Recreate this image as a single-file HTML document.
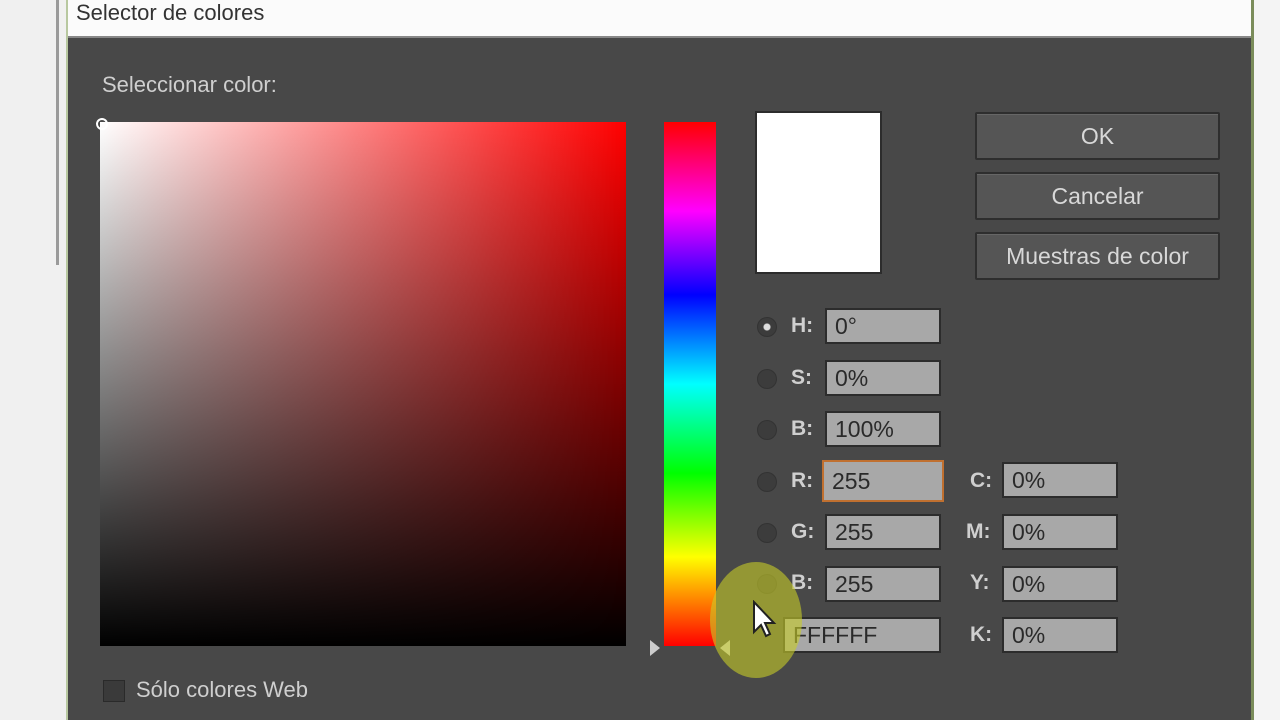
<!DOCTYPE html>
<html><head><meta charset="utf-8"><style>
*{margin:0;padding:0;box-sizing:border-box}
body{width:1280px;height:720px;overflow:hidden;background:#484848;font-family:"Liberation Sans",sans-serif;position:relative}
.abs{position:absolute}
.lbl{color:#cfcfcf;font-size:21px;position:absolute;font-weight:bold}
.inp{position:absolute;background:#a8a8a8;border:2px solid #2c2c2c;color:#2a2a2a;font-size:23px;padding-left:8px;line-height:32px;height:36px}
.btn{position:absolute;background:#555;border:2px solid #2e2e2e;color:#d8d8d8;font-size:23px;text-align:center;line-height:44px;height:48px;border-radius:2px;box-shadow:inset 0 1px 0 #666}
.rad{position:absolute;width:20px;height:20px;border-radius:50%;background:#3c3c3c;border:1px solid #333}
</style></head><body>
<div class="abs" style="left:0;top:0;width:68px;height:720px;background:#f0f0f0"></div>
<div class="abs" style="left:56px;top:0;width:3px;height:265px;background:#9a9a9a"></div>
<div class="abs" style="left:66px;top:0;width:2px;height:720px;background:#b8c8a0"></div>
<div class="abs" style="left:68px;top:0;width:1187px;height:38px;background:#fbfbfb;border-bottom:2px solid #888"></div>
<div class="abs" style="left:76px;top:0;font-size:22px;color:#333">Selector de colores</div>
<div class="abs" style="left:1251px;top:0;width:3px;height:720px;background:#7a8c5a"></div>
<div class="abs" style="left:1254px;top:0;width:26px;height:720px;background:#f4f4f4"></div>
<div class="lbl" style="left:102px;top:72px;font-size:22px;font-weight:normal">Seleccionar color:</div>
<div class="abs" style="left:100px;top:122px;width:526px;height:524px;background:linear-gradient(to bottom,rgba(0,0,0,0),#000),linear-gradient(to right,#fff,#f00)"></div>
<div class="abs" style="left:96px;top:118px;width:12px;height:12px;border:2px solid #fff;border-radius:50%"></div>
<div class="abs" style="left:664px;top:122px;width:52px;height:524px;background:linear-gradient(to bottom,#f00 0%,#f0f 17%,#00f 33%,#0ff 50%,#0f0 67%,#ff0 83%,#f00 100%)"></div>
<div class="abs" style="left:650px;top:640px;width:0;height:0;border-left:10px solid #ccc;border-top:8px solid transparent;border-bottom:8px solid transparent"></div>
<div class="abs" style="left:720px;top:640px;width:0;height:0;border-right:10px solid #ccc;border-top:8px solid transparent;border-bottom:8px solid transparent"></div>
<div class="abs" style="left:755px;top:111px;width:127px;height:163px;background:#fff;border:2px solid #2c2c2c"></div>
<div class="btn" style="left:975px;top:112px;width:245px">OK</div>
<div class="btn" style="left:975px;top:172px;width:245px">Cancelar</div>
<div class="btn" style="left:975px;top:232px;width:245px">Muestras de color</div>
<div class="rad" style="left:757px;top:317px;background:radial-gradient(circle,#ddd 0 3px,#3c3c3c 4px)"></div>
<div class="rad" style="left:757px;top:369px"></div>
<div class="rad" style="left:757px;top:420px"></div>
<div class="rad" style="left:757px;top:472px"></div>
<div class="rad" style="left:757px;top:523px"></div>
<div class="rad" style="left:757px;top:574px"></div>
<div class="lbl" style="left:791px;top:314px">H:</div>
<div class="lbl" style="left:791px;top:366px">S:</div>
<div class="lbl" style="left:791px;top:417px">B:</div>
<div class="lbl" style="left:791px;top:469px">R:</div>
<div class="lbl" style="left:791px;top:520px">G:</div>
<div class="lbl" style="left:791px;top:571px">B:</div>
<div class="inp" style="left:825px;top:308px;width:116px">0°</div>
<div class="inp" style="left:825px;top:360px;width:116px">0%</div>
<div class="inp" style="left:825px;top:411px;width:116px">100%</div>
<div class="inp" style="left:822px;top:460px;width:122px;height:42px;border-color:#c07030;line-height:38px">255</div>
<div class="inp" style="left:825px;top:514px;width:116px">255</div>
<div class="inp" style="left:825px;top:566px;width:116px">255</div>
<div class="inp" style="left:783px;top:617px;width:158px">FFFFFF</div>
<div class="lbl" style="left:970px;top:469px">C:</div>
<div class="lbl" style="left:966px;top:520px">M:</div>
<div class="lbl" style="left:970px;top:571px">Y:</div>
<div class="lbl" style="left:970px;top:623px">K:</div>
<div class="inp" style="left:1002px;top:462px;width:116px">0%</div>
<div class="inp" style="left:1002px;top:514px;width:116px">0%</div>
<div class="inp" style="left:1002px;top:566px;width:116px">0%</div>
<div class="inp" style="left:1002px;top:617px;width:116px">0%</div>
<div class="abs" style="left:710px;top:562px;width:92px;height:116px;border-radius:50%;background:rgba(200,205,40,0.6)"></div>
<svg class="abs" style="left:752px;top:600px" width="26" height="40" viewBox="0 0 26 40"><path d="M2 2 L2 32 L9 25 L14 36 L18 34 L13 23 L22 23 Z" fill="#fff" stroke="#222" stroke-width="2"/></svg>
<div class="abs" style="left:103px;top:680px;width:22px;height:22px;background:#3a3a3a;border:1px solid #2a2a2a"></div>
<div class="lbl" style="left:136px;top:677px;font-size:22px;font-weight:normal">Sólo colores Web</div>
</body></html>
